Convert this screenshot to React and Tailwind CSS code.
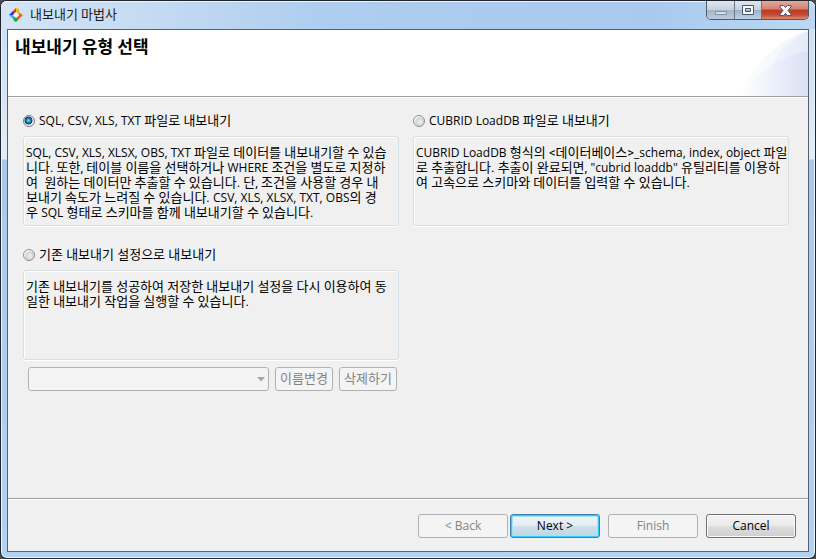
import React, { useState } from 'react';

const FILE_LINES = [
  'SQL, CSV, XLS, XLSX, OBS, TXT 파일로 데이터를 내보내기할 수 있습',
  '니다. 또한, 테이블 이름을 선택하거나 WHERE 조건을 별도로 지정하',
  '여  원하는 데이터만 추출할 수 있습니다. 단, 조건을 사용할 경우 내',
  '보내기 속도가 느려질 수 있습니다. CSV, XLS, XLSX, TXT, OBS의 경',
  '우 SQL 형태로 스키마를 함께 내보내기할 수 있습니다.',
];

const SAVED_LINES = [
  '기존 내보내기를 성공하여 저장한 내보내기 설정을 다시 이용하여 동',
  '일한 내보내기 작업을 실행할 수 있습니다.',
];

const LOADDB_LINES = [
  'CUBRID LoadDB 형식의 <데이터베이스>_schema, index, object 파일',
  '로 추출합니다. 추출이 완료되면, "cubrid loaddb" 유틸리티를 이용하',
  '여 고속으로 스키마와 데이터를 입력할 수 있습니다.',
];

function AppIcon() {
  return (
    <svg width="14" height="14" viewBox="0 0 14 14" aria-hidden="true">
      <path d="M7 0 V4 L4 7 L3 4 Z" fill="#e5322d" />
      <path d="M7 0 L10 1 V4 L12 5 L10 7 L7 4 Z" fill="#fbb416" />
      <path d="M0 7 L4 3 L5 6 L4 7 Z" fill="#1f3fc4" />
      <path d="M0 7 L4 7 L6 9 L4 11 Z" fill="#2ab6f0" />
      <path d="M4 10 L7 9 L10 11 L7 14 L5 13 Z" fill="#12ad48" />
      <path d="M10 5 L14 7 L10 11 L7 10 L10 7 Z" fill="#f2601e" />
      <path d="M7 4 L10 7 L7 10 L4 7 Z" fill="#f4fbff" />
    </svg>
  );
}

function HeaderSwoosh() {
  return (
    <svg className="block h-[66px] w-[72px]" viewBox="0 0 72 66" aria-hidden="true">
      <defs>
        <linearGradient id="outer" x1="0" x2="1">
          <stop offset="0" stopColor="#ffffff" />
          <stop offset="1" stopColor="#e4eaf8" />
        </linearGradient>
        <linearGradient id="inner" x1="0" x2="1">
          <stop offset="0" stopColor="#ffffff" />
          <stop offset="1" stopColor="#dbe1f5" />
        </linearGradient>
      </defs>
      <path d="M0 66 C18 36 40 10 72 1 V66 Z" fill="url(#outer)" />
      <path d="M16 40 C32 20 48 8 72 1 C54 11 44 20 36 34 L8 66 H0 Z" fill="#ffffff" opacity="0.4" />
      <path d="M4 66 C24 40 48 24 72 21 V66 Z" fill="url(#inner)" />
    </svg>
  );
}

function WindowControls() {
  return (
    <div className="flex h-[19px] w-[103px] overflow-hidden rounded-b-[5px] border border-t-0 border-[#4c5a6c]">
      <button
        aria-label="Minimize"
        className="flex w-[28px] items-center justify-center border-r border-[#68778a] bg-[linear-gradient(#dfe7f0_0%,#c6d2df_48%,#a6b5c8_52%,#bccbdc_100%)]"
      >
        <svg width="13" height="11" viewBox="0 0 13 11">
          <rect x="1.5" y="6.5" width="11" height="3" fill="#d4dee9" stroke="#8795a7" />
        </svg>
      </button>
      <button
        aria-label="Maximize"
        className="flex w-[27px] items-center justify-center border-r border-[#68778a] bg-[linear-gradient(#dfe7f0_0%,#c6d2df_48%,#9fb1c8_52%,#bdd0e4_100%)]"
      >
        <svg width="12" height="11" viewBox="0 0 12 11">
          <path
            d="M.5 .5 H11.5 V9.5 H.5 V.5 Z M3.5 3.5 V6.5 H8.5 V3.5 Z"
            fill="#f7f9fb"
            fillRule="evenodd"
            stroke="#4b5870"
          />
        </svg>
      </button>
      <button
        aria-label="Close"
        className="flex flex-1 items-center justify-center bg-[linear-gradient(#e5aa9d_0%,#d3816f_45%,#bb3a22_50%,#c4482f_75%,#dc8b6c_100%)]"
      >
        <svg width="13" height="11" viewBox="0 0 13 11">
          <path
            d="M1 .5 H4.5 L6.5 2.5 L8.5 .5 H12 V2 L9 5.5 L12 9 V10.5 H8.5 L6.5 8.5 L4.5 10.5 H1 V9 L4 5.5 L1 2 Z"
            fill="#f8f8f8"
            stroke="#54506a"
          />
        </svg>
      </button>
    </div>
  );
}

// Latin words are set one size smaller than the Hangul around them
function MixedText({ text }) {
  return text.split(/([A-Za-z_"][A-Za-z_", ]*[A-Za-z"])/).map((part, i) =>
    i % 2 ? (
      <span key={i} className="font-['Open_Sans',sans-serif] text-[12px]">
        {part}
      </span>
    ) : (
      part
    )
  );
}

function RadioOption({ value, label, selected, onSelect }) {
  return (
    <label className="flex h-4 items-center gap-1 whitespace-nowrap">
      <input
        type="radio"
        name="export-type"
        value={value}
        checked={selected === value}
        onChange={() => onSelect(value)}
        className="size-3 shrink-0 appearance-none rounded-full border border-[#8e8f8f] bg-[radial-gradient(circle_at_60%_60%,#f0f1f2_0%,#cdd1d5_50%,#f4f4f4_60%)] checked:border-[#777b80] checked:bg-[radial-gradient(circle_at_45%_45%,#8fe0fb_0%,#2398cd_22%,#0c3a5e_46%,#eef1f3_56%)]"
      />
      <span>
        <MixedText text={label} />
      </span>
    </label>
  );
}

function Description({ lines }) {
  return (
    <div className="mt-[7px] h-[90px] rounded-[3px] border border-[#d5dfe5] pt-2 pl-0.5 leading-[15px] whitespace-pre shadow-[inset_1px_1px_0_#fff,0_1px_0_#fff]">
      {lines.map((line) => (
        <p key={line}>
          <MixedText text={line} />
        </p>
      ))}
    </div>
  );
}

function SmallButton({ children }) {
  return (
    <button
      disabled
      className="h-6 w-[58px] rounded-[3px] border border-[#adb2b5] bg-[#f4f4f4] whitespace-nowrap text-[#838383]"
    >
      {children}
    </button>
  );
}

export default function App() {
  const [exportType, setExportType] = useState('file');

  return (
    <div className="flex min-h-screen flex-col bg-[#4a4a4a] font-['Roboto','Noto_Sans_CJK_KR',sans-serif] text-[13px] text-black">
      <div className="flex flex-1 flex-col rounded-[7px] border border-[#20242c] bg-[linear-gradient(#c9dff5_0px,#d5e5f5_90px,#e3edf7_158px,#a9c9ec_159px,#b1d1f5_100%)] px-1.5 pb-1.5 shadow-[inset_0_0_0_1px_#e9f4fd]">
        <header className="-mx-1.5 flex h-7 items-start justify-between rounded-t-[6px] bg-[linear-gradient(90deg,#d4e4f5_0%,#c4dbf2_18%,#aecdef_40%,#a9caee_80%,#bcd8f3_100%)] pr-[6px] pl-2 shadow-[inset_0_1px_0_#e9f4fd]">
          <div className="flex h-7 items-center gap-[7px]">
            <AppIcon />
            <span className="text-[#1b1b1b]">내보내기 마법사</span>
          </div>
          <WindowControls />
        </header>

        <main className="flex flex-1 flex-col border border-[#56616f] bg-[#f0f0f0]">
          <div className="flex justify-between border-b border-[#a0a0a0] bg-white">
            <h1 className="pt-2 pl-[7px] text-[17px] leading-[18px] font-bold">내보내기 유형 선택</h1>
            <HeaderSwoosh />
          </div>

          <div className="grid flex-1 grid-cols-2 gap-x-[14px] border-t border-white pt-[15px] pr-[19px] pl-[15px]">
            <div>
              <RadioOption
                value="file"
                label="SQL, CSV, XLS, TXT 파일로 내보내기"
                selected={exportType}
                onSelect={setExportType}
              />
              <Description lines={FILE_LINES} />

              <div className="mt-[21px]">
                <RadioOption
                  value="saved"
                  label="기존 내보내기 설정으로 내보내기"
                  selected={exportType}
                  onSelect={setExportType}
                />
                <Description lines={SAVED_LINES} />
              </div>

              <div className="mt-[7px] flex gap-[6px] pr-[2px] pl-[5px]">
                <div className="relative flex-1">
                  <select
                    disabled
                    aria-label="내보내기 설정"
                    className="block h-6 w-full appearance-none rounded-[3px] border border-[#adb2b5] bg-[#f4f4f4]"
                  />
                  <svg className="pointer-events-none absolute top-[10px] right-1" width="8" height="5" viewBox="0 0 8 5">
                    <path d="M0 0 H8 L4 4.5 Z" fill="#a5a8aa" />
                  </svg>
                </div>
                <SmallButton>이름변경</SmallButton>
                <SmallButton>삭제하기</SmallButton>
              </div>
            </div>

            <div>
              <RadioOption
                value="loaddb"
                label="CUBRID LoadDB 파일로 내보내기"
                selected={exportType}
                onSelect={setExportType}
              />
              <Description lines={LOADDB_LINES} />
            </div>
          </div>

          <footer className="border-t border-[#a0a0a0] font-['Open_Sans',sans-serif] text-[12px]">
            <div className="flex justify-end gap-2 border-t border-white pt-[14px] pr-3 pb-[13px]">
              <div className="flex gap-[2px]">
                <button disabled className="h-6 w-[90px] rounded-[3px] border border-[#adb2b5] bg-[#f4f4f4] text-[#838383]">
                  {'< Back'}
                </button>
                <button className="h-6 w-[90px] rounded-[3px] border border-[#3c7fb1] bg-[linear-gradient(#f0f5f8_0%,#e3edf3_48%,#cfe0ea_52%,#bcd6e4_100%)] shadow-[inset_0_0_0_1px_#35cdf5,inset_0_0_0_2px_#a4e3f7]">
                  {'Next >'}
                </button>
              </div>
              <button disabled className="h-6 w-[90px] rounded-[3px] border border-[#adb2b5] bg-[#f4f4f4] text-[#838383]">
                Finish
              </button>
              <button className="h-6 w-[90px] rounded-[3px] border border-[#707070] bg-[linear-gradient(#f2f2f2_0%,#ebebeb_48%,#dddddd_52%,#cfcfcf_100%)] shadow-[inset_0_0_0_1px_#fafafa]">
                Cancel
              </button>
            </div>
          </footer>
        </main>
      </div>
    </div>
  );
}
